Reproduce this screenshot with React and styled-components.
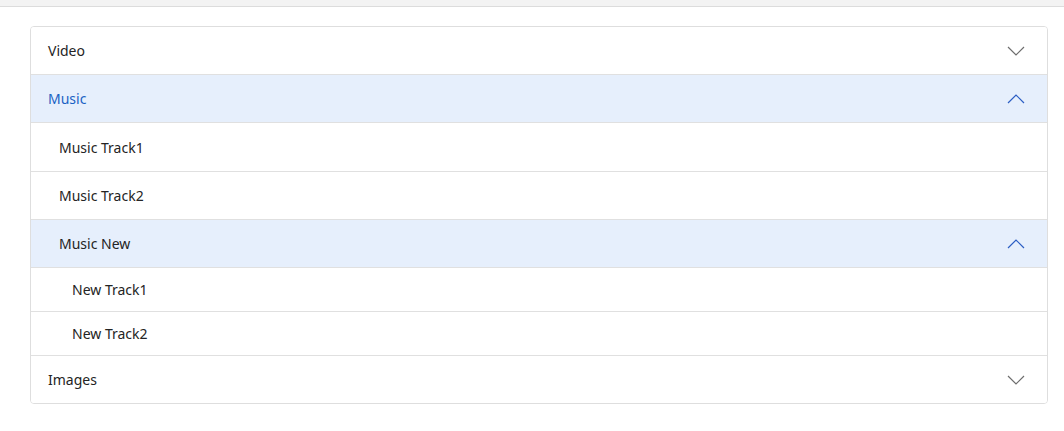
import React from 'react';
import styled, { createGlobalStyle } from 'styled-components';

const GlobalStyle = createGlobalStyle`
  body {
    margin: 0;
    background: #ffffff;
    font-family: "Noto Sans", "Open Sans", sans-serif;
    color: #212121;
  }
`;

const TopBar = styled.div`
  height: 6px;
  background: #f3f3f3;
  border-bottom: 1px solid #dcdcdc;
`;

const Page = styled.div`
  padding: 19px 16px 0 30px;
`;

const Accordion = styled.div`
  border: 1px solid #dedede;
  border-radius: 4px;
  overflow: hidden;
`;

const Row = styled.div`
  display: flex;
  align-items: center;
  justify-content: space-between;
  height: ${(p) => p.$height}px;
  padding: 0 22px 0 ${(p) => p.$indent}px;
  background: ${(p) => (p.$open ? '#e6effc' : '#ffffff')};
  color: ${(p) => (p.$accent ? '#1a62c4' : '#242424')};
  font-size: 14px;
  border-top: ${(p) => (p.$first ? 'none' : '1px solid #e0e0e0')};
`;

const Chevron = ({ up, color }) => (
  <svg width="18" height="10" viewBox="0 0 18 10" fill="none">
    <path
      d={up ? 'M1 9 L9 1 L17 9' : 'M1 1 L9 9 L17 1'}
      stroke={color}
      strokeWidth="1.2"
    />
  </svg>
);

const items = [
  { label: 'Video', indent: 17, height: 47, chevron: 'down', first: true },
  { label: 'Music', indent: 17, height: 47, chevron: 'up', open: true, accent: true },
  { label: 'Music Track1', indent: 28, height: 48 },
  { label: 'Music Track2', indent: 28, height: 47 },
  { label: 'Music New', indent: 28, height: 47, chevron: 'up', open: true },
  { label: 'New Track1', indent: 41, height: 43 },
  { label: 'New Track2', indent: 41, height: 43 },
  { label: 'Images', indent: 17, height: 47, chevron: 'down' },
];

export default function App() {
  return (
    <>
      <GlobalStyle />
      <TopBar />
      <Page>
        <Accordion>
          {items.map((it) => (
            <Row
              key={it.label}
              $indent={it.indent}
              $height={it.height}
              $open={it.open}
              $accent={it.accent}
              $first={it.first}
            >
              <span>{it.label}</span>
              {it.chevron && (
                <Chevron
                  up={it.chevron === 'up'}
                  color={it.chevron === 'up' ? '#2d5fc4' : '#6e6e6e'}
                />
              )}
            </Row>
          ))}
        </Accordion>
      </Page>
    </>
  );
}
